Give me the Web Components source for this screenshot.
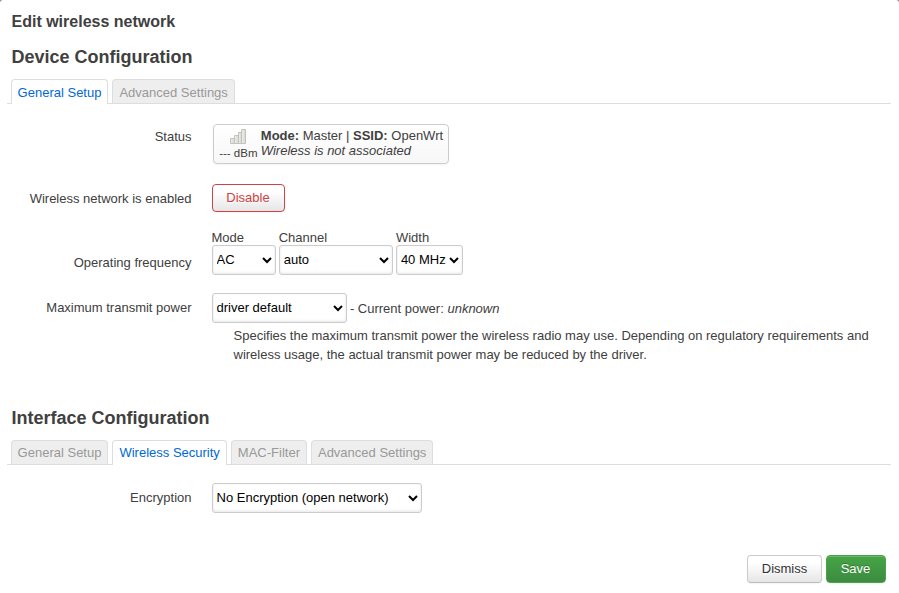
<!DOCTYPE html>
<html lang="en">
<head>
<meta charset="utf-8">
<title>Edit wireless network</title>
<style>
html{background:#808080}
body{margin:0;height:593px;overflow:hidden;background:#fff;border-radius:3px 3px 0 0;color:#404040;font:13px/18px "Liberation Sans",Arial,sans-serif}
</style>
</head>
<body>
<wifi-dialog></wifi-dialog>
<script>
const define = (name, html, setup) => customElements.define(name, class extends HTMLElement {
  connectedCallback() {
    if (this.shadowRoot) return;
    this.attachShadow({mode: 'open'}).innerHTML = html;
    if (setup) setup(this, this.shadowRoot);
  }
});

define('ui-tab', `<style>
:host{display:block;box-sizing:border-box;height:24px;padding:0 6px;border:1px solid #ddd;border-bottom:0;border-radius:4px 4px 0 0;background:#eee;color:#999;line-height:var(--tab-line,25px);white-space:nowrap}
:host([active]){height:25px;background:#fff;color:#0069d6}
</style><slot></slot>`);

define('ui-tabs', `<style>
:host{display:flex;box-sizing:border-box;height:25px;gap:4px;align-items:flex-start;padding-left:3.600px;width:884px;background:linear-gradient(#ddd,#ddd) 0 100%/100% 1px no-repeat}
</style><slot></slot>`);

define('form-row', `<style>
:host{display:grid;grid-template-columns:184.5px 1fr;column-gap:20px;align-items:start}
.label{text-align:right;padding-top:var(--label-top,6px);white-space:nowrap}
</style><div class="label"></div><div><slot></slot></div>`,
(el, root) => root.querySelector('.label').textContent = el.getAttribute('label'));

define('ui-select', `<style>
:host{display:block;line-height:14px}
.caption{display:block;height:14px}
select{display:block;box-sizing:border-box;width:var(--w);height:30px;margin:0;padding:0 0 2px;border:1px solid #ccc;border-radius:3px;background:#fff;box-shadow:inset 0 -1px 3px rgba(0,0,0,.1);color:#000;font:13px "Liberation Sans",Arial,sans-serif}
</style><select><option></option></select>`,
(el, root) => {
  root.querySelector('option').textContent = el.getAttribute('value');
  const caption = el.getAttribute('caption');
  if (caption) {
    const s = document.createElement('span');
    s.className = 'caption';
    s.textContent = caption;
    root.querySelector('select').before(s);
  }
});

define('ui-button', `<style>
:host{display:block}
button{display:block;box-sizing:border-box;width:var(--w);height:28px;margin:0;padding:0 0 1px;border:1px solid #ccc;border-bottom-color:#bbb;border-radius:4px;background:linear-gradient(#fff,#fff 25%,#e6e6e6);box-shadow:inset 0 1px 0 rgba(255,255,255,.2),0 1px 2px rgba(0,0,0,.05);color:#333;font:13px/18px "Liberation Sans",Arial,sans-serif;text-shadow:0 1px 1px rgba(255,255,255,.75)}
:host([kind=danger]) button{border-color:#c44;color:#c44}
:host([kind=save]) button{padding-right:1px;border-color:#46a546;background:linear-gradient(#46a546,#3d8b40);color:#fff;text-shadow:0 -1px 0 rgba(0,0,0,.25)}
</style><button><slot></slot></button>`);

define('signal-icon', `<style>:host{display:block;height:16px}svg{display:block}</style>
<svg width="16" height="16" viewBox="0 0 16 16"><defs><linearGradient id="g"><stop stop-color="#efefec"/><stop offset="1" stop-color="#d6d6d2"/></linearGradient></defs>
<g fill="url(#g)" stroke="#c3c3be" stroke-width="1"><path d="M.5 10.500h4v5h-4z"/><path d="M4.500 7.500h4v8h-4z"/><path d="M8.500 4.500h3v11h-3z"/><path d="M11.500 1.500h4v14h-4z"/></g></svg>`);

define('wifi-status', `<style>
:host{display:flex;box-sizing:border-box;width:236px;height:40px;margin-left:1.500px;padding:3px 0 0 4.800px;border:1px solid #ccc;border-radius:4px;background:linear-gradient(#fff,#f7f7f7);box-shadow:0 1px 2px rgba(0,0,0,.05);white-space:nowrap}
.signal{width:39px;margin-right:3px;display:flex;flex-direction:column;align-items:center;font-size:11.500px;line-height:18px}
.info{line-height:15px}
</style><div class="signal"><signal-icon></signal-icon><span>--- dBm</span></div>
<div class="info"><strong>Mode:</strong> Master | <strong>SSID:</strong> OpenWrt<br><em>Wireless is not associated</em></div>`);

define('wifi-dialog', `<style>
:host{display:flex;flex-direction:column;box-sizing:border-box;height:593px;padding:13px 8px 10px 7px}
h4,h3{margin:0 0 0 4.500px;font-weight:bold}
h4{font-size:16px;line-height:18px}
h3{font-size:18px;line-height:36px}
.device{margin-top:8px}
.interface{margin-top:36px}
ui-tabs{margin-top:4px}
.interface + ui-tabs{--tab-line:23px}
.status{--label-top:4px;height:40px;margin-top:20px}
.enabled{height:28px;margin-top:20px}
.freq{--label-top:23px;height:44px;margin-top:19px}
.power{height:71px;margin-top:18px}
.enc{margin-top:18px;height:30px}
.line{display:flex;gap:3.200px}
.current{padding:7px 0 0 .2px}
.help{padding:3px 0 0 22px;line-height:19px;white-space:nowrap}
footer{display:flex;justify-content:flex-end;gap:4px;margin-top:auto;padding-right:5px}
</style>
<h4>Edit wireless network</h4>
<h3 class="device">Device Configuration</h3>
<ui-tabs><ui-tab active>General Setup</ui-tab><ui-tab>Advanced Settings</ui-tab></ui-tabs>
<form-row class="status" label="Status"><wifi-status></wifi-status></form-row>
<form-row class="enabled" label="Wireless network is enabled"><ui-button kind="danger" style="--w:73px">Disable</ui-button></form-row>
<form-row class="freq" label="Operating frequency"><div class="line">
<ui-select caption="Mode" value="AC" style="--w:64px"></ui-select><ui-select caption="Channel" value="auto" style="--w:114px"></ui-select><ui-select caption="Width" value="40 MHz" style="--w:67px"></ui-select></div></form-row>
<form-row class="power" label="Maximum transmit power"><div class="line"><ui-select value="driver default" style="--w:135px"></ui-select><span class="current">- Current power: <em>unknown</em></span></div>
<div class="help">Specifies the maximum transmit power the wireless radio may use. Depending on regulatory requirements and<br>wireless usage, the actual transmit power may be reduced by the driver.</div></form-row>
<h3 class="interface">Interface Configuration</h3>
<ui-tabs><ui-tab>General Setup</ui-tab><ui-tab active>Wireless Security</ui-tab><ui-tab>MAC-Filter</ui-tab><ui-tab>Advanced Settings</ui-tab></ui-tabs>
<form-row class="enc" label="Encryption"><ui-select value="No Encryption (open network)" style="--w:210px"></ui-select></form-row>
<footer><ui-button style="--w:75px">Dismiss</ui-button><ui-button kind="save" style="--w:60px">Save</ui-button></footer>`);
</script>
</body>
</html>
